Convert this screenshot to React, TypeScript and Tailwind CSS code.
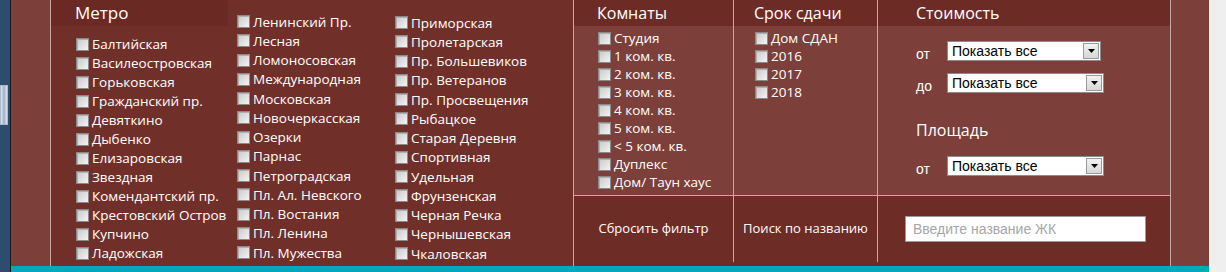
const metro1 = [
  "Балтийская",
  "Василеостровская",
  "Горьковская",
  "Гражданский пр.",
  "Девяткино",
  "Дыбенко",
  "Елизаровская",
  "Звездная",
  "Комендантский пр.",
  "Крестовский Остров",
  "Купчино",
  "Ладожская",
];

const metro2 = [
  "Ленинский Пр.",
  "Лесная",
  "Ломоносовская",
  "Международная",
  "Московская",
  "Новочеркасская",
  "Озерки",
  "Парнас",
  "Петроградская",
  "Пл. Ал. Невского",
  "Пл. Востания",
  "Пл. Ленина",
  "Пл. Мужества",
];

const metro3 = [
  "Приморская",
  "Пролетарская",
  "Пр. Большевиков",
  "Пр. Ветеранов",
  "Пр. Просвещения",
  "Рыбацкое",
  "Старая Деревня",
  "Спортивная",
  "Удельная",
  "Фрунзенская",
  "Черная Речка",
  "Чернышевская",
  "Чкаловская",
];

const rooms = [
  "Студия",
  "1 ком. кв.",
  "2 ком. кв.",
  "3 ком. кв.",
  "4 ком. кв.",
  "5 ком. кв.",
  "< 5 ком. кв.",
  "Дуплекс",
  "Дом/ Таун хаус",
];

const terms = ["Дом СДАН", "2016", "2017", "2018"];

const Box = () => (
  <span className="w-[13px] h-[13px] shrink-0 border border-[#8a8a8a] bg-gradient-to-br from-[#c8c8c8] to-[#f4f4f4] shadow-[inset_1px_1px_0_#b0b0b0]" />
);

const CheckItem = ({ label, h }: { label: string; h: string }) => (
  <label className={`flex items-center gap-[3px] ${h}`}>
    <Box />
    <span className="whitespace-nowrap">{label}</span>
  </label>
);

const Select = ({ w }: { w: string }) => (
  <div
    className={`${w} h-[20px] flex items-center bg-white border border-[#8c8c8c] pl-[4px] pr-[1px] text-[14px] text-black font-['Liberation_Sans',sans-serif]`}
  >
    <span className="flex-1">Показать все</span>
    <span className="w-[16px] h-[16px] flex items-center justify-center bg-gradient-to-b from-[#f2f2f2] to-[#d6d6d6] border border-[#9a9a9a]">
      <svg width="7" height="4" viewBox="0 0 7 4">
        <path d="M0 0h7L3.5 4z" fill="#000" />
      </svg>
    </span>
  </div>
);

const PriceRow = ({ label, w, mt }: { label: string; w: string; mt: string }) => (
  <div className={`flex items-center h-[20px] gap-[15px] ${mt}`}>
    <span className="w-[16px] translate-y-[3px]">{label}</span>
    <Select w={w} />
  </div>
);

export default function App() {
  return (
    <div className="flex w-[1226px] h-[272px] overflow-hidden font-['Open_Sans',sans-serif] text-[13.5px] text-white">
      {/* left page edge */}
      <div className="w-[10px] bg-[#2d4d6f] border-r border-[#1a1a1a] box-content pt-[85px]">
        <div className="w-[8px] h-[40px] border border-[#a9bacb] bg-gradient-to-r from-[#dfe7ef] via-[#9fb1c4] to-[#dfe7ef]" />
      </div>

      <div className="flex flex-col w-[1198px]">
        <div className="flex h-[266px] bg-[#7c3f39]">
          <div className="w-[39px]" />

          {/* Метро */}
          <div className="w-[523px] flex border-l border-[#c4a9a4] bg-[#712f29]">
            <div className="w-[177px] flex flex-col">
              <div className="h-[26px] bg-[#6b2924] pl-[24px] text-[17px] leading-[26px]">
                Метро
              </div>
              <div className="pl-[25px] pt-[9px]">
                {metro1.map((m) => (
                  <CheckItem key={m} label={m} h="h-[19px]" />
                ))}
              </div>
            </div>
            <div className="w-[157px] pl-[9px] pt-[12px]">
              {metro2.map((m) => (
                <CheckItem key={m} label={m} h="h-[19.25px]" />
              ))}
            </div>
            <div className="flex-1 pl-[10px] pt-[13px]">
              {metro3.map((m) => (
                <CheckItem key={m} label={m} h="h-[19.25px]" />
              ))}
            </div>
          </div>

          {/* Right filters */}
          <div className="w-[598px] flex flex-col border-l border-r border-[#c4a9a4]">
            <div className="h-[196px] flex border-b border-[#c4a9a4]">
              <div className="w-[160px] flex flex-col border-r border-[#c4a9a4]">
                <div className="h-[26px] bg-[#6d2b26] pl-[23px] text-[16px] leading-[26px]">
                  Комнаты
                </div>
                <div className="pl-[24px] pt-[3px]">
                  {rooms.map((r) => (
                    <CheckItem key={r} label={r} h="h-[18px]" />
                  ))}
                </div>
              </div>
              <div className="w-[144px] flex flex-col border-r border-[#c4a9a4]">
                <div className="h-[26px] bg-[#6d2b26] pl-[20px] text-[16px] leading-[26px]">
                  Срок сдачи
                </div>
                <div className="pl-[21px] pt-[3px]">
                  {terms.map((t) => (
                    <CheckItem key={t} label={t} h="h-[18px]" />
                  ))}
                </div>
              </div>
              <div className="flex-1 flex flex-col">
                <div className="h-[26px] bg-[#6d2b26] pl-[38px] text-[16px] leading-[26px]">
                  Стоимость
                </div>
                <div className="pl-[38px] font-['Liberation_Sans',sans-serif] text-[14px]">
                  <PriceRow label="от" w="w-[154px]" mt="mt-[15px]" />
                  <PriceRow label="до" w="w-[157px]" mt="mt-[12px]" />
                  <div className="mt-[24px] text-[16px] font-['Open_Sans',sans-serif] leading-[26px]">
                    Площадь
                  </div>
                  <PriceRow label="от" w="w-[157px]" mt="mt-[13px]" />
                </div>
              </div>
            </div>
            <div className="flex-1 flex bg-[#6e2c27] text-[13px] pb-[4px]">
              <div className="w-[160px] flex items-center justify-center border-r border-[#c4a9a4]">
                Сбросить фильтр
              </div>
              <div className="w-[144px] flex items-center justify-center border-r border-[#c4a9a4]">
                Поиск по названию
              </div>
              <div className="flex-1 flex items-center pl-[27px]">
                <input
                  placeholder="Введите название ЖК"
                  className="w-[241px] h-[26px] bg-white border border-[#9a9a9a] px-[7px] text-[14px] text-black placeholder:text-[#a6a6a6] font-['Liberation_Sans',sans-serif] outline-none"
                />
              </div>
            </div>
          </div>

          <div className="flex-1" />
        </div>
        <div className="h-[6px] bg-[#00aab8]" />
      </div>

      <div className="flex-1 bg-[#efefef]" />
    </div>
  );
}
